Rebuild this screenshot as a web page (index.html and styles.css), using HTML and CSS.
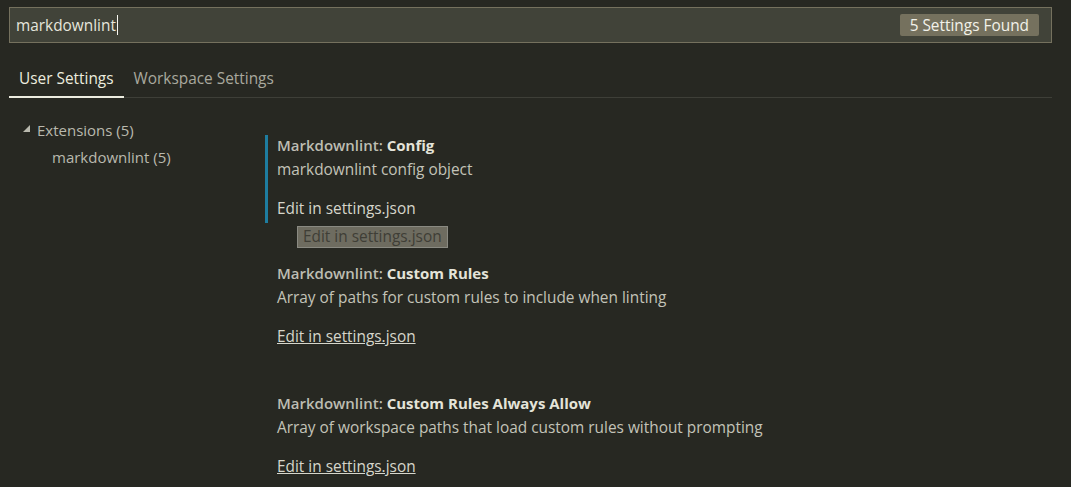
FILE: index.html
```html
<!DOCTYPE html>
<html>
<head>
<meta charset="utf-8">
<link rel="stylesheet" href="styles.css">
</head>
<body>
<div class="page">
  <div class="search">
    <span class="query">markdownlint</span><span class="caret"></span>
    <span class="badge">5 Settings Found</span>
  </div>
  <div class="tabs">
    <div class="tab active">User Settings</div>
    <div class="tab">Workspace Settings</div>
  </div>
  <div class="body">
    <div class="tree">
      <div class="tree-row"><span class="twist"></span>Extensions (5)</div>
      <div class="tree-row child">markdownlint (5)</div>
    </div>
    <div class="list">
      <div class="setting focused">
        <div class="title"><span class="cat">Markdownlint: </span><span class="name">Config</span></div>
        <div class="desc">markdownlint config object</div>
        <div class="edit plain">Edit in settings.json</div>
        <div class="tooltip">Edit in settings.json</div>
      </div>
      <div class="setting">
        <div class="title"><span class="cat">Markdownlint: </span><span class="name">Custom Rules</span></div>
        <div class="desc">Array of paths for custom rules to include when linting</div>
        <div class="edit">Edit in settings.json</div>
      </div>
      <div class="setting">
        <div class="title"><span class="cat">Markdownlint: </span><span class="name">Custom Rules Always Allow</span></div>
        <div class="desc">Array of workspace paths that load custom rules without prompting</div>
        <div class="edit">Edit in settings.json</div>
      </div>
    </div>
  </div>
</div>
</body>
</html>
```
FILE: styles.css
```css
html, body {
  margin: 0;
  padding: 0;
  background: #272822;
  height: 100%;
  overflow: hidden;
}
.page {
  font-family: "Open Sans", "Noto Sans", sans-serif;
  font-size: 15.4px;
  color: #cfcfc2;
  padding: 7px 19px 0 9px;
}
.search {
  height: 34px;
  border: 1px solid #75715e;
  background: #414339;
  display: flex;
  align-items: center;
  padding: 0 12px 0 6px;
  color: #e6e6dc;
}
.caret {
  width: 1px;
  height: 20px;
  background: #f8f8f2;
  margin-left: 1px;
}
.badge {
  margin-left: auto;
  background: #75715e;
  color: #f2f2ea;
  border-radius: 2px;
  padding: 2px 10px 0;
  height: 22px;
  box-sizing: border-box;
  line-height: 20px;
}
.tabs {
  display: flex;
  margin-top: 14px;
  border-bottom: 1px solid #3e3f38;
  height: 40px;
}
.tab {
  padding: 4px 10px 0;
  line-height: 35px;
  color: #a9a99e;
}
.tab.active {
  color: #ececdf;
  border-bottom: 2px solid #ececdf;
  margin-bottom: -1px;
}
.body {
  display: flex;
  margin-top: 18px;
}
.tree {
  width: 256px;
  flex: none;
  font-size: 15px;
  color: #b9b9ae;
}
.tree-row {
  height: 27px;
  line-height: 24px;
  padding-left: 14px;
  display: flex;
  align-items: center;
}
.tree-row.child {
  padding-left: 43px;
}
.twist {
  width: 0;
  height: 0;
  border-left: 7px solid transparent;
  border-bottom: 7px solid #b9b9ae;
  margin-right: 7px;
  margin-top: -2px;
}
.list {
  flex: 1;
  padding-top: 19px;
}
.setting {
  position: relative;
  padding: 0 0 14px 9px;
  border-left: 3px solid transparent;
  margin-bottom: 32px;
}
.setting.focused {
  border-left-color: #1e7da0;
  padding-bottom: 0;
  margin-bottom: 40px;
}
.title {
  font-weight: 600;
  font-size: 15px;
  line-height: 20px;
  color: #bdbdb2;
}
.title .name {
  font-weight: 700;
  color: #e4e4d9;
}
.desc {
  line-height: 20px;
  margin-top: 5px;
  color: #c3c3b8;
}
.edit {
  line-height: 20px;
  margin-top: 19px;
  color: #d6d6cb;
  text-decoration: underline;
}
.edit.plain {
  text-decoration: none;
  padding-bottom: 4px;
}
.tooltip {
  position: absolute;
  left: 29px;
  top: 91px;
  background: #6e6c60;
  border: 1px solid #8a8a82;
  color: #3f3e36;
  line-height: 20px;
  padding: 0 5px;
}
```
